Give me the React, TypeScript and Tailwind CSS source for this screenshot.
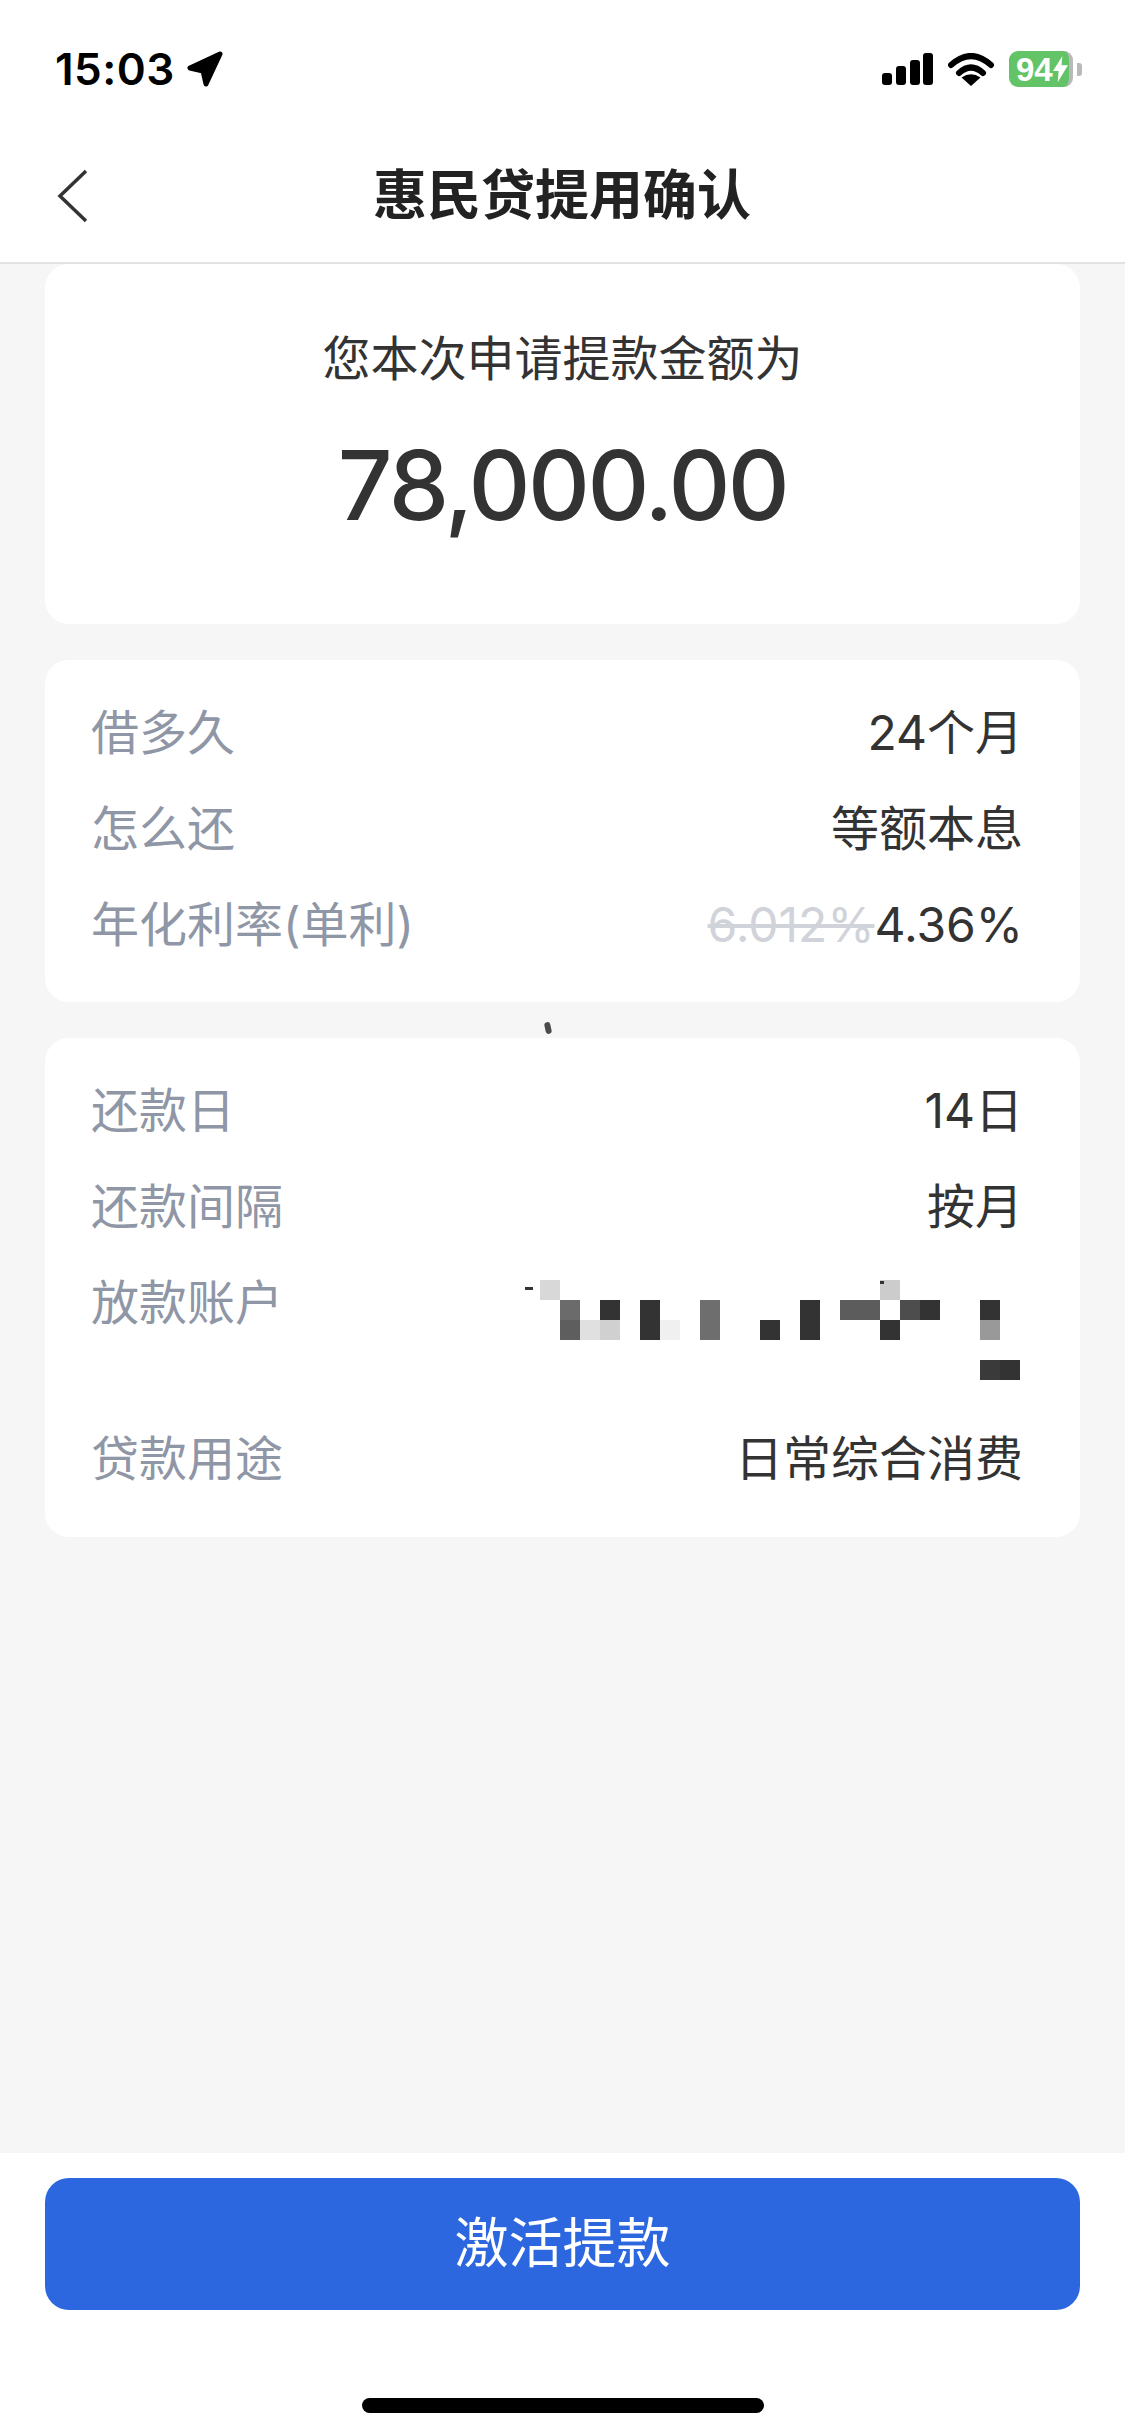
import React from "react";

const cjk = { fontFamily: '"Inter", "Noto Sans CJK SC", sans-serif' };

// mosaic cells of the blurred account number: x, y, colour (20px cells)
const mosaicCells: [number, number, string][] = [
  [20, 0, "#d8d8d8"],
  [40, 20, "#6b6b6b"],
  [40, 40, "#5e5e5e"],
  [60, 40, "#e0e0e0"],
  [80, 20, "#333333"],
  [80, 40, "#d0d0d0"],
  [120, 20, "#333333"],
  [120, 40, "#333333"],
  [140, 40, "#f0f0f0"],
  [180, 20, "#6e6e6e"],
  [180, 40, "#6e6e6e"],
  [240, 40, "#333333"],
  [280, 20, "#333333"],
  [280, 40, "#333333"],
  [320, 20, "#5c5c5c"],
  [340, 20, "#5c5c5c"],
  [360, 0, "#cccccc"],
  [360, 40, "#333333"],
  [380, 20, "#4d4d4d"],
  [400, 20, "#333333"],
  [460, 20, "#333333"],
  [460, 40, "#999999"],
  [460, 80, "#3a3a3a"],
  [480, 80, "#333333"],
];

const Row: React.FC<{ label: string; children: React.ReactNode }> = ({
  label,
  children,
}) => (
  <div className="flex h-[96px] items-center justify-between">
    <span className="text-[#8f96a6]">{label}</span>
    <span className="text-[#333333]">{children}</span>
  </div>
);

const StatusBar = () => (
  <div className="flex h-[132px] items-start justify-between pl-[55px] pr-[43px] pt-[51px]">
    <div className="flex h-[36px] items-center gap-[12px]">
      <span className="text-[44px] font-semibold leading-[36px] tracking-[0.5px] text-black">
        15:03
      </span>
      <svg width="36" height="36" viewBox="0 0 36 36">
        <path
          d="M33 3 L3 17 L16 20 L19 33 Z"
          fill="#000"
          stroke="#000"
          strokeWidth="5"
          strokeLinejoin="round"
        />
      </svg>
    </div>
    <div className="flex h-[36px] items-center">
      <svg width="51" height="32" viewBox="0 0 51 32">
        <rect x="0" y="20" width="10" height="12" rx="3" fill="#000" />
        <rect x="14" y="13" width="10" height="19" rx="3" fill="#000" />
        <rect x="28" y="7" width="10" height="25" rx="3" fill="#000" />
        <rect x="41" y="0" width="10" height="32" rx="3" fill="#000" />
      </svg>
      <svg width="46" height="33" viewBox="0 0 46 33" className="ml-[15px]">
        <path
          d="M3 12 Q23 -6 43 12"
          fill="none"
          stroke="#000"
          strokeWidth="6"
          strokeLinecap="round"
        />
        <path
          d="M11 20 Q23 9 35 20"
          fill="none"
          stroke="#000"
          strokeWidth="6"
          strokeLinecap="round"
        />
        <path d="M13.500 24.500 Q23 18 32.500 24.500 L23 33 Z" fill="#000" />
      </svg>
      <div className="ml-[15px] flex items-center">
        <div className="flex h-[36px] w-[64px] items-center rounded-[9px] border-r-[4px] border-[#b9b9b9] bg-[#62c466] pl-[7px]">
          <span className="font-['Liberation_Sans'] text-[33px] font-bold leading-none text-white">
            94
          </span>
          <svg width="15" height="28" viewBox="0 0 16 28" className="shrink-0">
            <path d="M10 0 L0 16 H6 L5 28 L16 10 H9 Z" fill="#fff" />
          </svg>
        </div>
        <div className="ml-[4px] h-[13px] w-[5px] rounded-r-[3px] bg-[#b9b9b9]" />
      </div>
    </div>
  </div>
);

export default function App() {
  return (
    <div
      className="flex h-[2436px] w-[1125px] flex-col overflow-hidden bg-[#f6f6f6] text-[48px] leading-none"
      style={cjk}
    >
      <div className="border-b-[2px] border-[#e2e2e2] bg-white">
        <StatusBar />
        <div className="flex h-[130px] items-center pb-[2px] pl-[56px]">
          <svg width="34" height="56" viewBox="0 0 34 56" className="shrink-0">
            <path
              d="M30 3 L4 28 L30 53"
              fill="none"
              stroke="#333333"
              strokeWidth="3.500"
            />
          </svg>
          <h1 className="ml-[283px] text-[54px] font-bold text-[#222222]">
            惠民贷提用确认
          </h1>
        </div>
      </div>

      <div className="relative flex flex-1 flex-col gap-[36px] px-[45px]">
        <div className="flex h-[360px] flex-col items-center rounded-[24px] bg-white pt-[71px] text-[#333333]">
          <p>您本次申请提款金额为</p>
          <p className="mt-[54px] text-[96px] font-medium tracking-[-2.500px]">
            78,000.00
          </p>
        </div>

        <div className="rounded-[24px] bg-white pb-[29px] pl-[46px] pr-[57px] pt-[25px]">
          <Row label="借多久">24个月</Row>
          <Row label="怎么还">等额本息</Row>
          <Row label="年化利率(单利)">
            <span className="text-[#d0d3da] line-through">6.012%</span>
            4.36%
          </Row>
        </div>

        <div className="absolute left-[545px] top-[758px] h-[12px] w-[6px] -rotate-12 rounded-full bg-[#4a4a4a]" />

        <div className="rounded-[24px] bg-white pb-[30px] pl-[46px] pr-[57px] pt-[25px]">
          <Row label="还款日">14日</Row>
          <Row label="还款间隔">按月</Row>
          <div className="flex h-[156px] items-start justify-between">
            <span className="flex h-[96px] items-center text-[#8f96a6]">放款账户</span>
            <svg width="500" height="100" viewBox="0 0 500 100" className="mr-[3px] mt-[25px]">
              {mosaicCells.map(([x, y, color]) => (
                <rect key={`${x}-${y}`} x={x} y={y} width="20" height="20" fill={color} />
              ))}
              <rect x="5" y="7" width="8" height="3" fill="#333333" />
              <rect x="360" y="1" width="4" height="3" fill="#333333" />
            </svg>
          </div>
          <Row label="贷款用途">日常综合消费</Row>
        </div>
      </div>

      <div className="flex h-[283px] flex-col items-center bg-white px-[45px] pt-[25px]">
        <button className="flex h-[132px] w-full items-center justify-center rounded-[24px] bg-[#2c67e0] text-[54px] text-white">
          激活提款
        </button>
        <div className="mt-[88px] h-[15px] w-[402px] rounded-full bg-black" />
      </div>
    </div>
  );
}
